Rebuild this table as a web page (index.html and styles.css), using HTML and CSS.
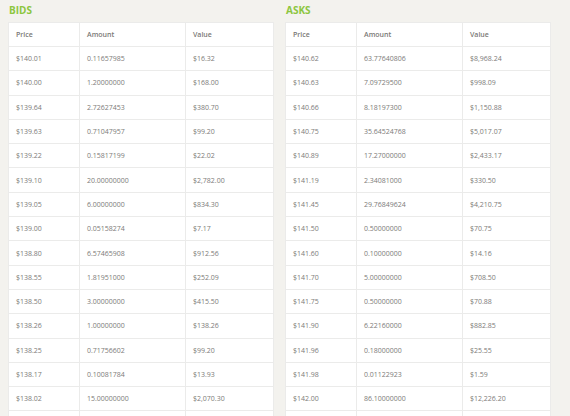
FILE: index.html
```html
<!DOCTYPE html>
<html>
<head>
<meta charset="utf-8">
<link rel="stylesheet" href="styles.css">
</head>
<body>
<div class="books">
  <section class="book">
    <h2 class="book-title">BIDS</h2>
    <table class="orders">
      <colgroup><col class="c1"><col class="c2"><col class="c3"></colgroup>
      <thead><tr><th>Price</th><th>Amount</th><th>Value</th></tr></thead>
      <tbody>
        <tr><td>$140.01</td><td>0.11657985</td><td>$16.32</td></tr>
        <tr><td>$140.00</td><td>1.20000000</td><td>$168.00</td></tr>
        <tr><td>$139.64</td><td>2.72627453</td><td>$380.70</td></tr>
        <tr><td>$139.63</td><td>0.71047957</td><td>$99.20</td></tr>
        <tr><td>$139.22</td><td>0.15817199</td><td>$22.02</td></tr>
        <tr><td>$139.10</td><td>20.00000000</td><td>$2,782.00</td></tr>
        <tr><td>$139.05</td><td>6.00000000</td><td>$834.30</td></tr>
        <tr><td>$139.00</td><td>0.05158274</td><td>$7.17</td></tr>
        <tr><td>$138.80</td><td>6.57465908</td><td>$912.56</td></tr>
        <tr><td>$138.55</td><td>1.81951000</td><td>$252.09</td></tr>
        <tr><td>$138.50</td><td>3.00000000</td><td>$415.50</td></tr>
        <tr><td>$138.26</td><td>1.00000000</td><td>$138.26</td></tr>
        <tr><td>$138.25</td><td>0.71756602</td><td>$99.20</td></tr>
        <tr><td>$138.17</td><td>0.10081784</td><td>$13.93</td></tr>
        <tr><td>$138.02</td><td>15.00000000</td><td>$2,070.30</td></tr>
        <tr class="tail"><td></td><td></td><td></td></tr>
      </tbody>
    </table>
  </section>
  <section class="book">
    <h2 class="book-title">ASKS</h2>
    <table class="orders">
      <colgroup><col class="c1"><col class="c2"><col class="c3"></colgroup>
      <thead><tr><th>Price</th><th>Amount</th><th>Value</th></tr></thead>
      <tbody>
        <tr><td>$140.62</td><td>63.77640806</td><td>$8,968.24</td></tr>
        <tr><td>$140.63</td><td>7.09729500</td><td>$998.09</td></tr>
        <tr><td>$140.66</td><td>8.18197300</td><td>$1,150.88</td></tr>
        <tr><td>$140.75</td><td>35.64524768</td><td>$5,017.07</td></tr>
        <tr><td>$140.89</td><td>17.27000000</td><td>$2,433.17</td></tr>
        <tr><td>$141.19</td><td>2.34081000</td><td>$330.50</td></tr>
        <tr><td>$141.45</td><td>29.76849624</td><td>$4,210.75</td></tr>
        <tr><td>$141.50</td><td>0.50000000</td><td>$70.75</td></tr>
        <tr><td>$141.60</td><td>0.10000000</td><td>$14.16</td></tr>
        <tr><td>$141.70</td><td>5.00000000</td><td>$708.50</td></tr>
        <tr><td>$141.75</td><td>0.50000000</td><td>$70.88</td></tr>
        <tr><td>$141.90</td><td>6.22160000</td><td>$882.85</td></tr>
        <tr><td>$141.96</td><td>0.18000000</td><td>$25.55</td></tr>
        <tr><td>$141.98</td><td>0.01122923</td><td>$1.59</td></tr>
        <tr><td>$142.00</td><td>86.10000000</td><td>$12,226.20</td></tr>
        <tr class="tail"><td></td><td></td><td></td></tr>
      </tbody>
    </table>
  </section>
</div>
</body>
</html>
```
FILE: styles.css
```css
html, body {
  margin: 0;
  padding: 0;
  background: #f3f2ee;
  font-family: "Open Sans", "Liberation Sans", sans-serif;
  overflow: hidden;
}
.books {
  display: flex;
  gap: 12px;
  padding: 3px 20px 0 8px;
}
.book {
  width: 265px;
  flex: none;
}
.book-title {
  margin: 0 0 5px 0;
  font-size: 10px;
  line-height: 14px;
  font-weight: 700;
  color: #8cc63f;
  padding-left: 1px;
}
.orders {
  width: 265px;
  border-collapse: collapse;
  table-layout: fixed;
  background: #ffffff;
}
.c1 { width: 71px; }
.c2 { width: 106px; }
.c3 { width: 88px; }
.orders th,
.orders td {
  border: 1px solid #ebebea;
  text-align: left;
  padding: 0 7px;
  font-size: 7px;
  color: #7d7b78;
  white-space: nowrap;
}
.orders th {
  height: 23px;
  font-weight: 600;
  color: #7a7875;
}
.orders td {
  height: 23.3px;
  font-weight: 400;
}
.orders .tail td {
  height: 40px;
}
```
